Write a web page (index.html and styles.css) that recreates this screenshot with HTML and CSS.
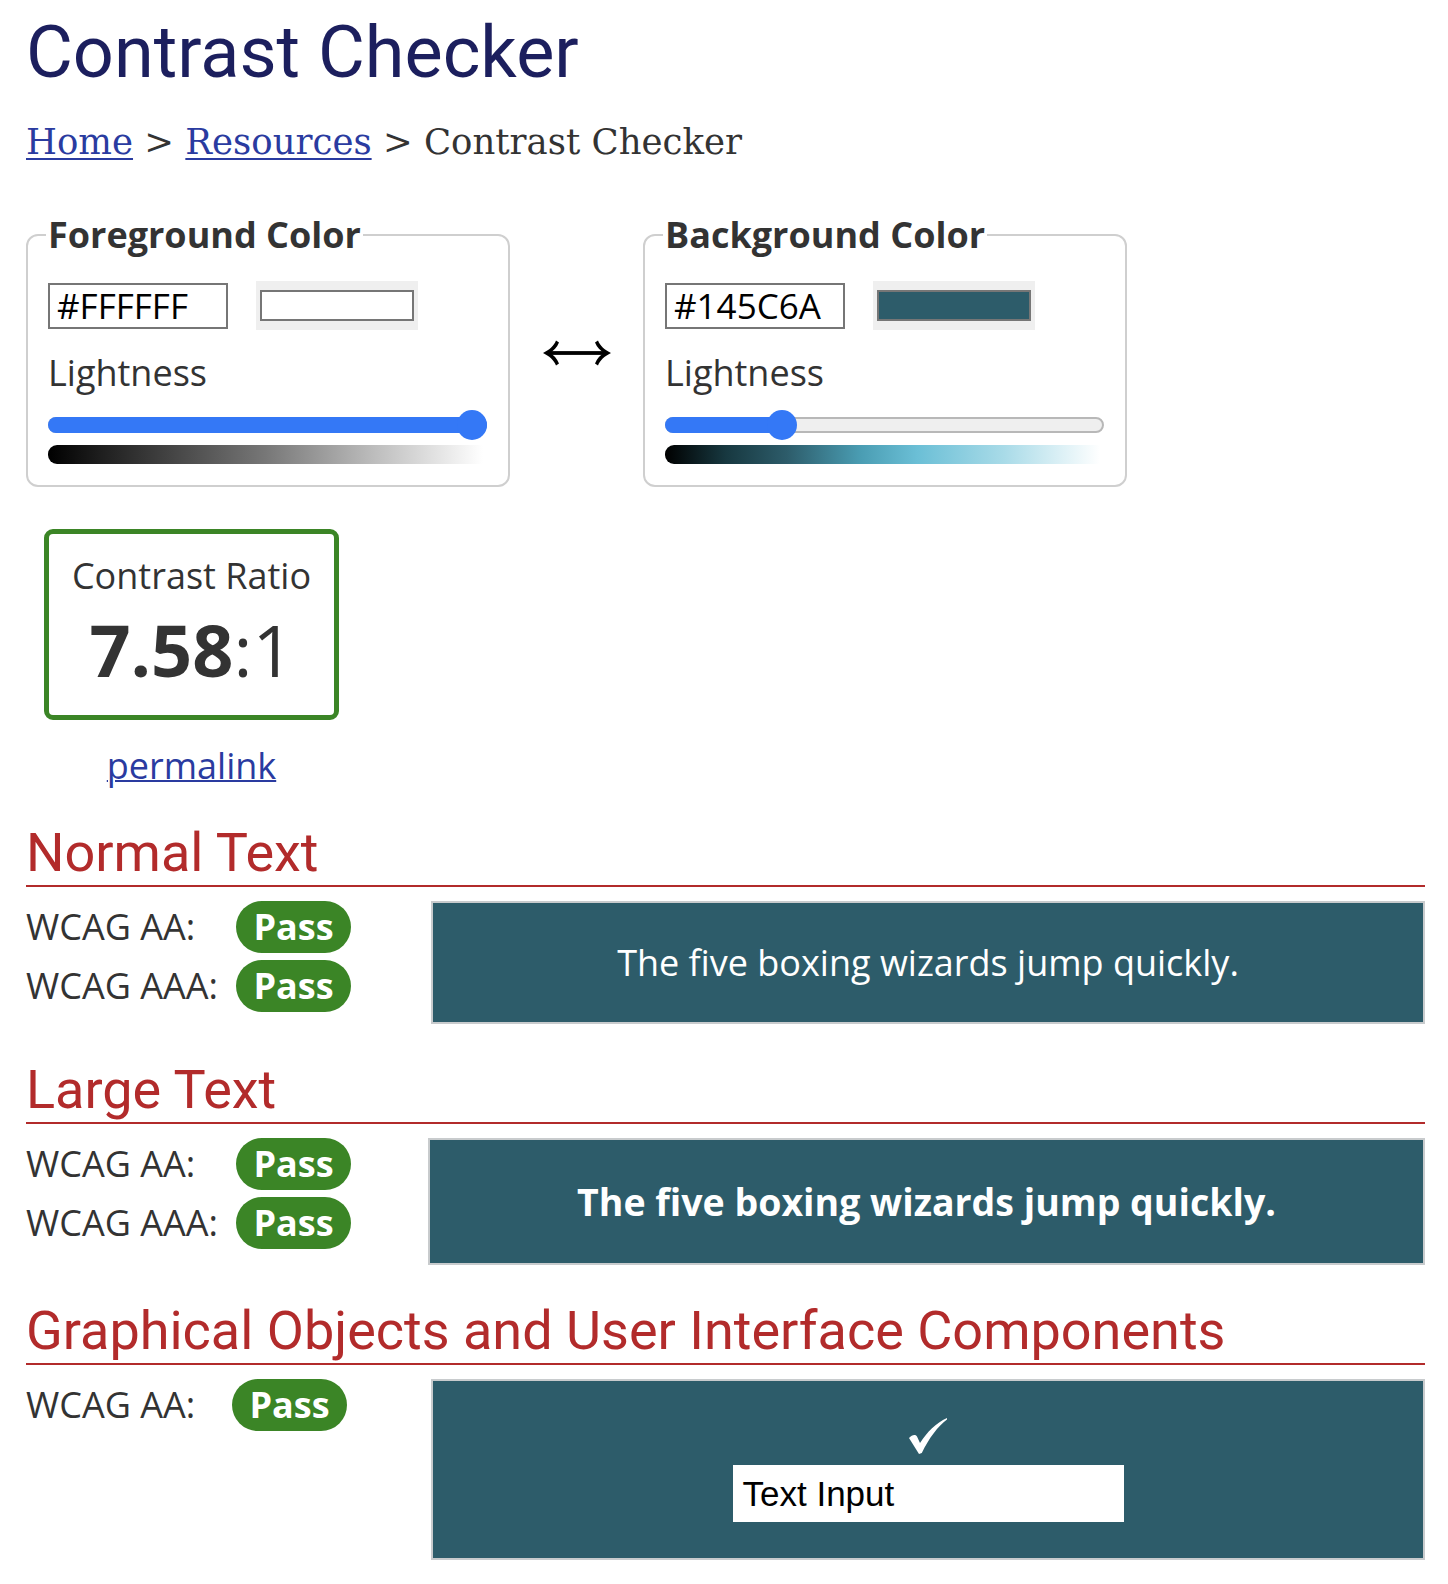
FILE: index.html
```html
<!DOCTYPE html>
<html lang="en">
<head>
<meta charset="utf-8">
<title>Contrast Checker</title>
<link rel="stylesheet" href="styles.css">
</head>
<body>
<main class="page">
  <h1 class="title">Contrast Checker</h1>
  <nav class="crumbs"><a href="#">Home</a> &gt; <a href="#">Resources</a> &gt; Contrast Checker</nav>

  <div class="pickers">
    <fieldset class="picker">
      <legend>Foreground Color</legend>
      <div class="row">
        <input class="hex" type="text" value="#FFFFFF">
        <div class="swatch"><span class="swatch-fg"></span></div>
      </div>
      <div class="light-label">Lightness</div>
      <div class="slider">
        <div class="track"></div>
        <div class="fill fill-fg"></div>
        <div class="thumb thumb-fg"></div>
      </div>
      <div class="gradient gradient-fg"></div>
    </fieldset>

    <div class="arrow">
      <svg width="68" height="26" viewBox="0 0 68 26" aria-hidden="true">
        <rect x="4" y="11.1" width="60" height="3.8" fill="#000"/>
        <path d="M0 13 C6 10 11 6 13 0.5 L16 2.6 C14 7.5 10.5 11 7 13 C10.5 15 14 18.5 16 23.4 L13 25.5 C11 20 6 16 0 13 Z" fill="#000"/>
        <path d="M68 13 C62 10 57 6 55 0.5 L52 2.6 C54 7.5 57.5 11 61 13 C57.5 15 54 18.5 52 23.4 L55 25.5 C57 20 62 16 68 13 Z" fill="#000"/>
      </svg>
    </div>

    <fieldset class="picker">
      <legend>Background Color</legend>
      <div class="row">
        <input class="hex" type="text" value="#145C6A">
        <div class="swatch"><span class="swatch-bg"></span></div>
      </div>
      <div class="light-label">Lightness</div>
      <div class="slider">
        <div class="track"></div>
        <div class="fill fill-bg"></div>
        <div class="thumb thumb-bg"></div>
      </div>
      <div class="gradient gradient-bg"></div>
    </fieldset>
  </div>

  <div class="result">
    <div class="ratio-box">
      <div class="ratio-label">Contrast Ratio</div>
      <div class="ratio-value"><b>7.58</b>:1</div>
    </div>
    <a class="permalink" href="#">permalink</a>
  </div>

  <section class="sec sec-first">
    <h2 class="sec-title">Normal Text</h2>
    <div class="sec-body">
      <div class="checks">
        <div class="check"><span class="check-label">WCAG AA:</span><span class="pass">Pass</span></div>
        <div class="check"><span class="check-label">WCAG AAA:</span><span class="pass">Pass</span></div>
      </div>
      <div class="sample sample-normal">The five boxing wizards jump quickly.</div>
    </div>
  </section>

  <section class="sec">
    <h2 class="sec-title">Large Text</h2>
    <div class="sec-body">
      <div class="checks checks-large">
        <div class="check"><span class="check-label">WCAG AA:</span><span class="pass">Pass</span></div>
        <div class="check"><span class="check-label">WCAG AAA:</span><span class="pass">Pass</span></div>
      </div>
      <div class="sample sample-large">The five boxing wizards jump quickly.</div>
    </div>
  </section>

  <section class="sec">
    <h2 class="sec-title">Graphical Objects and User Interface Components</h2>
    <div class="sec-body">
      <div class="checks">
        <div class="check"><span class="check-label check-label-narrow">WCAG AA:</span><span class="pass">Pass</span></div>
      </div>
      <div class="sample sample-ui">
        <svg class="checkmark" width="38" height="36" viewBox="0 0 38 36" aria-hidden="true">
          <path d="M0 20 C3 17 6 16 8 18.5 L11 25 C18 14 27 5 38 0 L38 1.4 C29 8 20 20 12.8 35 L10 36 Z" fill="#fff"/>
        </svg>
        <div class="text-input">Text Input</div>
      </div>
    </div>
  </section>
</main>
</body>
</html>
```

FILE: styles.css
```css
body {
  margin: 0;
  background: #fff;
  color: #333;
  font-family: "Open Sans", "Noto Sans", sans-serif;
}

.page {
  padding: 0 23px 25px 26px;
}

.title {
  margin: 11px 0 0;
  font-family: Roboto, "Liberation Sans", sans-serif;
  font-weight: 400;
  font-size: 72px;
  line-height: 84px;
  color: #1c1f5e;
}

.crumbs {
  margin-top: 27px;
  font-family: "DejaVu Serif", "Liberation Serif", serif;
  font-size: 35.5px;
  line-height: 40px;
  color: #333;
}

.crumbs a {
  color: #2a3ba0;
  text-decoration: underline;
  text-decoration-thickness: 2px;
  text-underline-offset: 4px;
}

.pickers {
  display: flex;
  align-items: center;
  margin-top: 51px;
}

.picker {
  width: 484px;
  box-sizing: border-box;
  margin: 0;
  border: 2px solid #cfcfcf;
  border-radius: 12px;
  padding: 25px 21px 21px 20px;
  min-width: 0;
}

.picker legend {
  margin-left: -2px;
  padding: 0 2px;
  font-weight: 700;
  font-size: 36px;
  line-height: 43px;
  color: #333;
}

.row {
  display: flex;
  align-items: center;
  gap: 28px;
}

.hex {
  width: 180px;
  height: 46px;
  box-sizing: border-box;
  margin: 0;
  border: 2px solid #767676;
  border-radius: 0;
  padding: 0 7px;
  font-family: "Open Sans", sans-serif;
  font-size: 35px;
  color: #000;
  background: #fff;
  outline: none;
}

.swatch {
  width: 162px;
  height: 49px;
  box-sizing: border-box;
  padding: 9px 4px;
  background: #efefef;
}

.swatch span {
  display: block;
  height: 100%;
  box-sizing: border-box;
  border: 2px solid #767676;
}

.swatch-fg {
  background: #ffffff;
}

.swatch-bg {
  background: #2d5c6a;
}

.light-label {
  margin-top: 18px;
  font-size: 36px;
  line-height: 49px;
  color: #333;
}

.slider {
  position: relative;
  height: 30px;
  margin-top: 13px;
}

.track {
  position: absolute;
  left: 0;
  right: 0;
  top: 7px;
  height: 16px;
  box-sizing: border-box;
  border: 2px solid #b8b8b8;
  border-radius: 8px;
  background: #efefef;
}

.fill {
  position: absolute;
  left: 0;
  top: 7px;
  height: 16px;
  border-radius: 8px;
  background: #3478f6;
}

.fill-fg {
  width: 100%;
}

.fill-bg {
  width: 117px;
}

.thumb {
  position: absolute;
  top: 0;
  width: 30px;
  height: 30px;
  border-radius: 50%;
  background: #3478f6;
}

.thumb-fg {
  left: 409px;
}

.thumb-bg {
  left: 102px;
}

.gradient {
  height: 19px;
  margin-top: 5px;
  margin-right: 4px;
  border-radius: 9px 0 0 9px;
}

.gradient-fg {
  background: linear-gradient(to right, #000 0%, #1e1e1e 12%, #777 50%, #bdbdbd 75%, #fff 100%);
}

.gradient-bg {
  background: linear-gradient(to right, #000 0%, #173840 14%, #2d5c6a 28%, #4a9db3 45%, #6bbfd6 58%, #a9dbe8 78%, #fff 100%);
}

.arrow {
  width: 133px;
  display: flex;
  justify-content: center;
  align-items: center;
  padding-top: 5px;
}

.result {
  width: 295px;
  margin: 42px 0 0 18px;
}

.ratio-box {
  height: 191px;
  box-sizing: border-box;
  border: 5px solid #3b8526;
  border-radius: 9px;
  padding-top: 17px;
  text-align: center;
  color: #333;
}

.ratio-label {
  font-size: 36px;
  line-height: 49px;
}

.ratio-value {
  font-size: 72px;
  line-height: 98px;
}

.ratio-value b {
  font-weight: 700;
}

.permalink {
  display: block;
  margin-top: 21px;
  text-align: center;
  font-size: 36px;
  line-height: 49px;
  color: #2a3ba0;
  text-decoration-thickness: 2px;
}

.sec {
  margin-top: 33px;
}

.sec-first {
  margin-top: 30px;
}

.sec-title {
  margin: 0;
  font-family: Roboto, "Liberation Sans", sans-serif;
  font-weight: 400;
  font-size: 54px;
  line-height: 65px;
  color: #b22b2b;
  border-bottom: 2px solid #b22b2b;
}

.sec-body {
  display: flex;
  margin-top: 14px;
}

.checks {
  width: 405px;
  flex: none;
  display: flex;
  flex-direction: column;
  gap: 7px;
}

.checks-large {
  width: 402px;
}

.check {
  display: flex;
  align-items: center;
  height: 52px;
}

.check-label {
  width: 210px;
  flex: none;
  font-size: 36px;
  line-height: 48px;
  color: #333;
}

.check-label-narrow {
  width: 206px;
}

.pass {
  width: 115px;
  height: 52px;
  border-radius: 26px;
  background: #3b8526;
  color: #fff;
  font-weight: 700;
  font-size: 36px;
  line-height: 52px;
  text-align: center;
}

.sample {
  flex: 1;
  box-sizing: border-box;
  border: 2px solid #c8cbcd;
  background: #2d5c6a;
  color: #fff;
  display: flex;
  align-items: center;
  justify-content: center;
}

.sample-normal {
  height: 123px;
  font-size: 36px;
}

.sample-large {
  height: 127px;
  font-size: 37.5px;
  font-weight: 700;
}

.sample-ui {
  height: 181px;
  flex-direction: column;
  gap: 11px;
}

.checkmark {
  display: block;
}

.text-input {
  width: 391px;
  height: 57px;
  box-sizing: border-box;
  padding: 0 10px;
  background: #fff;
  color: #000;
  font-family: "Liberation Sans", Arial, sans-serif;
  font-size: 35px;
  line-height: 57px;
}
```
